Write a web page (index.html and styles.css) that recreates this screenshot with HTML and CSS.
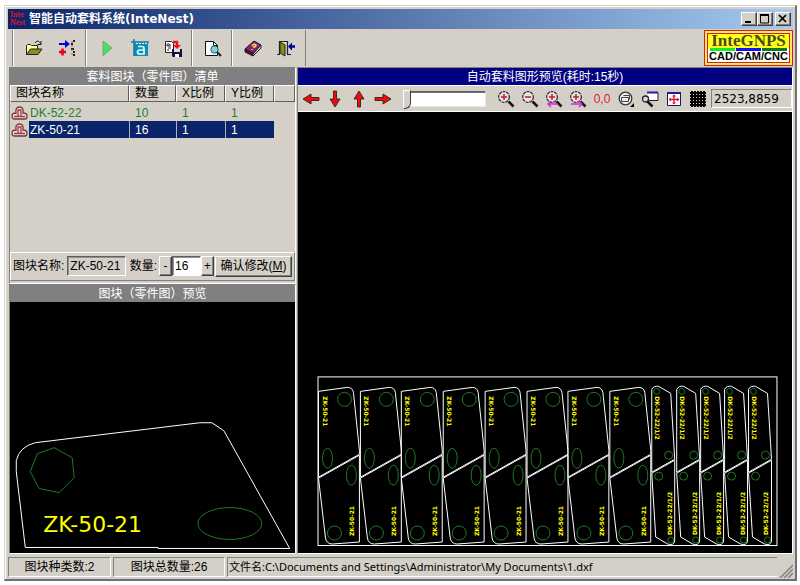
FILE: index.html
```
<!DOCTYPE html>
<html lang="zh-CN">
<head>
    <meta charset="utf-8">
    <title>智能自动套料系统(InteNest)</title>
    <link rel="stylesheet" href="styles.css">
</head>
<body>
    <div class="window">
        <!-- Title bar -->
        <header class="titlebar">
            <span class="app-icon"><span>Inte</span><span>Nest</span></span>
            <h1>智能自动套料系统(InteNest)</h1>
            <div class="window-buttons">
                <button type="button" aria-label="最小化"><svg width="10" height="10" viewBox="0 0 10 10"><path d="M1 8h6" stroke="#000" stroke-width="2"/></svg></button>
                <button type="button" aria-label="最大化"><svg width="10" height="10" viewBox="0 0 10 10"><path d="M0 1h9" stroke="#000" stroke-width="2"/><path d="M.5 1v8h8V1" fill="none" stroke="#000"/></svg></button>
                <button type="button" class="close" aria-label="关闭"><svg width="10" height="10" viewBox="0 0 10 10"><path d="M1 1l7 7M8 1l-7 7" stroke="#000" stroke-width="1.7"/></svg></button>
            </div>
        </header>

        <!-- Main toolbar -->
        <div class="toolbar">
            <div class="tool-group">
                <button type="button" aria-label="打开">
                    <svg width="18" height="16" viewBox="0 0 18 16"><path d="M1.500 14.500V5.500l1-1h3l1 1h6v4" fill="#ffff9c" stroke="#222"/><path d="M1.500 14.500l4-5.500h11.500l-4 5.500z" fill="#8f8f20" stroke="#222"/><path d="M10 3c2-3 4-2 5.500.5M16 1v3.500h-3.500" fill="none" stroke="#111"/></svg>
                </button>
                <button type="button" aria-label="添加图块">
                    <svg width="18" height="16" viewBox="0 0 18 16"><path d="M1 4h8" stroke="#0000e0" stroke-width="2"/><path d="M7 0l5 4-5 4z" fill="#0000e0"/><path d="M1 12h7M4.500 8.500v7" stroke="#f00018" stroke-width="2.500"/><path d="M15 1h2M13 4h2M13 9h3M15 12h2M15 15h2" stroke="#222" stroke-width="1.800"/><path d="M14 1v14" stroke="#b55" stroke-dasharray="2 2"/></svg>
                </button>
            </div>
            <div class="tool-group">
                <button type="button" aria-label="开始套料">
                    <svg width="18" height="18" viewBox="0 0 18 18"><path d="M5 2l9 7-9 8z" fill="#48e060" stroke="#6f9a72" stroke-width=".7"/></svg>
                </button>
                <button type="button" aria-label="文字标注">
                    <svg width="18" height="18" viewBox="0 0 18 18"><path d="M3 4h14v13H3z" fill="#078fb8"/><path d="M0 3h18M3 0v17" stroke="#087da4" stroke-width="1.500"/><path d="M5 4.500h12" stroke="#d8f3ff" stroke-dasharray="2 1"/><path d="M7 7.500h4q2 0 2 2V15H9q-2.500 0-2.500-2T9 11h4" fill="none" stroke="#e8fbff" stroke-width="1.700"/></svg>
                </button>
                <button type="button" aria-label="保存结果">
                    <svg width="18" height="17" viewBox="0 0 18 17"><path d="M1.500 1.500h6l2 2v9h-8z" fill="#fff" stroke="#222"/><path d="M3 4h2v2H3zM4 8h3M3 10h2M6 4v3" stroke="#333" fill="none"/><path d="M9 2h4v4" fill="none" stroke="#f01020" stroke-width="2.500"/><path d="M9 5h8l-4 4z" fill="#f01020"/><path d="M8 9h10v8H9l-1-1z" fill="#151545"/><path d="M10 9h6v3h-6z" fill="#ddd"/><path d="M11 14h4v3h-4z" fill="#fff"/></svg>
                </button>
            </div>
            <div class="tool-group">
                <button type="button" aria-label="预览">
                    <svg width="18" height="17" viewBox="0 0 18 17"><path d="M1.500 1.500h8l4 4v10h-12z" fill="#fff" stroke="#111"/><path d="M9.500 1.500v4h4" fill="none" stroke="#111"/><circle cx="10.500" cy="9.500" r="3.700" fill="#7fd0d5" stroke="#245b65"/><path d="M13 12l4 4" stroke="#222" stroke-width="2.200"/></svg>
                </button>
            </div>
            <div class="tool-group">
                <button type="button" aria-label="帮助">
                    <svg width="18" height="17" viewBox="0 0 18 17"><path d="M1 9l9-8 7 4-8 9z" fill="#82256d" stroke="#281028"/><path d="M1 9v3l8 4v-3z" fill="#511442" stroke="#281028"/><path d="M9 14l8-9v3l-8 8z" fill="#ddd" stroke="#281028"/><path d="M8 6q2-3 4-1 0 2-3 2M8 9v1" fill="none" stroke="#ffd85a" stroke-width="1.500"/></svg>
                </button>
                <button type="button" aria-label="退出">
                    <svg width="18" height="17" viewBox="0 0 18 17"><path d="M0 14.500h3M2.500 14V1.500h8V14M10 14.500h4" fill="none" stroke="#222" stroke-width="1.200"/><path d="M3 2l5 3v11l-5-3z" fill="#888b18" stroke="#222"/><path d="M14 6.500h4" stroke="#000094" stroke-width="2.500"/><path d="M11 6.500l4-4v8z" fill="#000094"/></svg>
                </button>
            </div>
            <div class="logo">
                <span class="logo-name">InteGNPS</span>
                <span class="logo-bars"><i></i><i></i><i></i></span>
                <span class="logo-sub">CAD/CAM/CNC</span>
            </div>
        </div>

        <main class="panels">
            <div class="left">
                <!-- Part list -->
                <section class="list-panel">
                    <h2>套料图块（零件图）清单</h2>
                    <div class="list">
                        <table>
                            <colgroup><col class="c-icon"><col class="c-name"><col class="c-num"><col class="c-scale"><col class="c-scale"><col></colgroup>
                            <thead>
                                <tr><th colspan="2">图块名称</th><th>数量</th><th>X比例</th><th>Y比例</th><th></th></tr>
                            </thead>
                            <tbody>
                                <tr class="done">
                                    <td><svg class="part-icon" width="17" height="14" viewBox="0 0 17 14"><use href="#partIcon"/></svg></td>
                                    <td>DK-52-22</td><td>10</td><td>1</td><td>1</td><td></td>
                                </tr>
                                <tr class="selected">
                                    <td><svg class="part-icon" width="17" height="14" viewBox="0 0 17 14"><use href="#partIcon"/></svg></td>
                                    <td>ZK-50-21</td><td>16</td><td>1</td><td>1</td><td></td>
                                </tr>
                            </tbody>
                        </table>
                    </div>
                    <form class="edit-bar">
                        <label for="partName">图块名称:</label>
                        <input type="text" id="partName" class="name-field" value="ZK-50-21" readonly>
                        <label for="partCount">数量:</label>
                        <button type="button" class="step minus">-</button>
                        <input type="text" id="partCount" class="count-field" value="16">
                        <button type="button" class="step">+</button>
                        <button type="button" class="confirm">确认修改(<u>M</u>)</button>
                    </form>
                </section>

                <!-- Part preview -->
                <section class="part-panel">
                    <h2>图块（零件图）预览</h2>
                    <div class="canvas">
                        <svg viewBox="10 301 285 252" preserveAspectRatio="xMidYMax meet">
                            <path class="outline" d="M25 547L16 471V460Q19 446 35 442L200 422H212L224 430L290 548H158V547Z"/>
                            <path class="hole" d="M54 447L72 457L74 477L59 492L39 488L30 471L37 453Z"/>
                            <ellipse class="hole" cx="230" cy="523" rx="32" ry="16"/>
                            <text class="mark big" x="43" y="532">ZK-50-21</text>
                        </svg>
                    </div>
                </section>
            </div>

            <!-- Nesting preview -->
            <section class="right">
                <h2 class="active">自动套料图形预览(耗时:15秒)</h2>
                <div class="view-bar">
                    <div class="arrows">
                        <button type="button" aria-label="左移"><svg width="18" height="18" viewBox="0 0 18 18"><use href="#arrow"/></svg></button>
                        <button type="button" aria-label="下移"><svg width="18" height="18" viewBox="0 0 18 18"><use href="#arrow" transform="rotate(-90 9 9)"/></svg></button>
                        <button type="button" aria-label="上移"><svg width="18" height="18" viewBox="0 0 18 18"><use href="#arrow" transform="rotate(90 9 9)"/></svg></button>
                        <button type="button" aria-label="右移"><svg width="18" height="18" viewBox="0 0 18 18"><use href="#arrow" transform="rotate(180 9 9)"/></svg></button>
                    </div>
                    <input type="range" class="slider" min="0" max="100" value="0" aria-label="移动步长">
                    <div class="view-tools">
                        <button type="button" aria-label="放大"><svg width="18" height="18" viewBox="0 0 18 18"><use href="#lens"/><path d="M4 7h6M7 4v6" stroke="#c41840" stroke-width="1.500"/></svg></button>
                        <button type="button" aria-label="缩小"><svg width="18" height="18" viewBox="0 0 18 18"><use href="#lens"/><path d="M4 7h6" stroke="#a02048" stroke-width="1.500"/></svg></button>
                        <button type="button" aria-label="上一视图"><svg width="18" height="18" viewBox="0 0 18 18"><use href="#lens"/><path d="M4 7h6M7 4v6" stroke="#c41840" stroke-width="1.500"/><path d="M3 14h10M6 11l-3 3 3 3" fill="none" stroke="#e020e0" stroke-width="1.400"/></svg></button>
                        <button type="button" aria-label="下一视图"><svg width="18" height="18" viewBox="0 0 18 18"><use href="#lens"/><path d="M4 7h6M7 4v6" stroke="#c41840" stroke-width="1.500"/><path d="M2 14h11M10 11l3 3-3 3" fill="none" stroke="#e020e0" stroke-width="1.400"/></svg></button>
                        <button type="button" class="origin">0,0</button>
                        <button type="button" aria-label="全部显示"><svg width="18" height="18" viewBox="0 0 18 18"><circle cx="8.500" cy="8.500" r="6.300" fill="#eee" stroke="#333" stroke-width="1.300"/><path d="M4.500 7.500h7v4h-7zM6.500 5.500h6v4" fill="none" stroke="#444"/><path d="M17 13v4h-4z" fill="#000"/></svg></button>
                        <button type="button" aria-label="窗口缩放"><svg width="18" height="18" viewBox="0 0 18 18"><path d="M6 2.500h11v8H8" fill="#fff" stroke="#222"/><path d="M6 2.500h11" stroke="#1c1ca8" stroke-width="2"/><circle cx="4.500" cy="9" r="3" fill="#ddd" stroke="#222" stroke-width="1.300"/><path d="M6.500 11.500l5 5" stroke="#111" stroke-width="2.500"/></svg></button>
                        <button type="button" aria-label="居中"><svg width="18" height="18" viewBox="0 0 18 18"><path d="M2.500 3.500h13v12h-13z" fill="#fff" stroke="#1a1a50"/><path d="M2 3h14" stroke="#1c1c94" stroke-width="2"/><path d="M4 9.500h10M9 5v9" stroke="#e01030" stroke-width="1.300"/><path d="M4 9.500l2-2v4zM14 9.500l-2-2v4zM9 4.500l-2 2h4zM9 14.500l-2-2h4z" fill="#e01030"/></svg></button>
                        <button type="button" aria-label="网格"><svg width="18" height="18" viewBox="0 0 18 18"><path d="M1 3h16M1 6h16M1 9h16M1 12h16M1 15h16M3 1v16M6 1v16M9 1v16M12 1v16M15 1v16" stroke="#000" stroke-width="2"/></svg></button>
                    </div>
                    <output class="coords">2523,8859</output>
                </div>
                <div class="canvas">
                    <svg viewBox="298 111 494 442" preserveAspectRatio="xMidYMax meet">
                        <defs>
                            <g id="partIcon">
                                <path d="M1 10q0-3 4-3Q4 1 8.500 1T12 7q4 0 4 3 0 3-2 3H3q-2 0-2-3z" fill="#f3d6d4" stroke="#73333a" stroke-width="1.300"/>
                                <path d="M3 10.500h11M7 10V4h3v6" fill="none" stroke="#9b4048" stroke-width="1.300"/>
                            </g>
                            <g id="arrow">
                                <path d="M1 9l8-5v3.500h8v3H9V14z" fill="#e80c14" stroke="#321" stroke-width=".9"/>
                            </g>
                            <g id="lens">
                                <circle cx="7" cy="7" r="5.300" fill="#ece4e0" stroke="#333" stroke-width="1.300" stroke-dasharray="3 .8"/>
                                <path d="M11.500 11.500l5 5" stroke="#111" stroke-width="2.500"/>
                            </g>
                            <!-- A pair of ZK-50-21 parts, head to tail -->
                            <g id="zkPair">
                                <path class="outline" d="M0 477V391L29 387Q34 387 35 392L41 450V454Z"/>
                                <path class="outline" d="M0 478L7 538Q8 544 14 544L41 542V455L0 478"/>
                                <circle class="hole" cx="26" cy="399" r="7"/>
                                <ellipse class="hole" cx="9" cy="458" rx="5" ry="10"/>
                                <circle class="hole" cx="16" cy="533" r="7"/>
                                <ellipse class="hole" cx="33" cy="475" rx="5" ry="10"/>
                                <text class="mark" transform="translate(4 396) rotate(90)">ZK-50-21</text>
                                <text class="mark" transform="translate(36 536) rotate(-90)">ZK-50-21</text>
                            </g>
                            <!-- A pair of DK-52-22 parts -->
                            <g id="dkPair">
                                <path class="outline" d="M0 472V389Q2 385 7 386L19 393L22 442L23 459Z"/>
                                <path class="outline" d="M0 473L4 537L16 544Q22 546 23 541V460Z"/>
                                <circle class="hole" cx="5" cy="391" r="3"/>
                                <circle class="hole" cx="17" cy="455" r="4"/>
                                <circle class="hole" cx="7" cy="476" r="4"/>
                                <circle class="hole" cx="19" cy="540" r="3"/>
                                <text class="mark" transform="translate(3 396) rotate(90)">DK-52-22/1/2</text>
                                <text class="mark" transform="translate(20 535) rotate(-90)">DK-52-22/1/2</text>
                            </g>
                        </defs>
                        <rect class="outline" x="317.500" y="376.500" width="460" height="169"/>
                        <use href="#zkPair" x="318"/>
                        <use href="#zkPair" x="360"/>
                        <use href="#zkPair" x="401"/>
                        <use href="#zkPair" x="443"/>
                        <use href="#zkPair" x="485"/>
                        <use href="#zkPair" x="527"/>
                        <use href="#zkPair" x="568"/>
                        <use href="#zkPair" x="610"/>
                        <use href="#dkPair" x="652"/>
                        <use href="#dkPair" x="677"/>
                        <use href="#dkPair" x="701"/>
                        <use href="#dkPair" x="725"/>
                        <use href="#dkPair" x="749"/>
                    </svg>
                </div>
            </section>
        </main>

        <!-- Status bar -->
        <footer class="statusbar">
            <span class="kinds">图块种类数:2</span>
            <span class="total">图块总数量:26</span>
            <span class="file">文件名:C:\Documents and Settings\Administrator\My Documents\1.dxf</span>
            <svg class="grip" width="14" height="14" viewBox="0 0 14 14"><path d="M1 14L14 1M5 14l9-9M9 14l5-5" stroke="#808080" stroke-width="1.500"/></svg>
        </footer>
    </div>
</body>
</html>
```
FILE: styles.css
```
* {
    box-sizing: border-box;
}
body {
    margin: 0;
    height: 100vh;
    padding: 5px 3px 4px 4px;
    background: #fff;
    font-family: "Liberation Sans", "Noto Sans CJK SC", sans-serif;
    font-size: 12px;
    line-height: 16px;
    color: #000;
}
h1, h2 {
    margin: 0;
    font-size: 12px;
    white-space: nowrap;
}
button, input {
    font: inherit;
    color: inherit;
    margin: 0;
    padding: 0;
}
button {
    display: flex;
    align-items: center;
    justify-content: center;
    border: 0;
    background: none;
}
svg {
    display: block;
}

/* Window frame */
.window {
    height: 100%;
    display: flex;
    flex-direction: column;
    background: #d4d0c8;
    border: 1px solid #d4d0c8;
    border-right: 2px solid #707070;
    border-bottom: 2px solid #707070;
    box-shadow: inset 1px 1px #fff;
    padding: 3px 2px 1px 3px;
}
.titlebar {
    display: flex;
    align-items: center;
    height: 20px;
    flex: none;
    background: linear-gradient(to right, #0a246a, #a6caf0);
    color: #fff;
    padding: 0 2px;
}
.titlebar h1 {
    flex: 1;
    margin-left: 3px;
    font-family: "DejaVu Sans", "Noto Sans CJK SC", sans-serif;
    font-size: 12px;
    font-weight: bold;
}
.app-icon {
    display: flex;
    flex-direction: column;
    width: 16px;
    font: bold 8px/8px "Liberation Serif", serif;
    color: #e01028;
}
.window-buttons {
    display: flex;
}
.window-buttons button {
    width: 16px;
    height: 14px;
}
.window-buttons .close {
    margin-left: 2px;
}
.window-buttons button,
.step,
.confirm {
    background: #d4d0c8;
    border: 1px solid;
    border-color: #fff #404040 #404040 #fff;
    box-shadow: inset -1px -1px #808080;
}

/* Main toolbar */
.toolbar {
    display: flex;
    flex: none;
    height: 38px;
    padding: 1px 0 1px 5px;
}
.tool-group {
    display: flex;
    align-items: center;
    padding: 0 3px;
    border-left: 1px solid #fff;
    box-shadow: -1px 0 #808080;
}
.tool-group button {
    width: 33px;
    height: 30px;
}
.tool-group:nth-child(4) {
    border-right: 1px solid #808080;
}
.logo {
    display: flex;
    flex-direction: column;
    margin-left: auto;
    width: 89px;
    border: 1px solid #d02020;
    box-shadow: inset 0 0 0 2px #ffe860, inset 0 0 0 3px #d02020;
    background: #fff;
    padding: 3px;
    text-align: center;
}
.logo-name {
    height: 14px;
    background: #ffff20;
    font: bold 17px/14px "Liberation Serif", serif;
    color: #4b4b10;
}
.logo-bars {
    display: flex;
    gap: 1px;
    height: 5px;
    padding: 0 2px;
}
.logo-bars i {
    flex: 1;
    background: #10f020;
}
.logo-bars i:nth-child(2) {
    background: #1010f0;
}
.logo-bars i:nth-child(3) {
    background: #107818;
}
.logo-sub {
    font-size: 11px;
    line-height: 11px;
    font-weight: bold;
}

/* Panels */
.panels {
    flex: 1;
    min-height: 0;
    display: grid;
    grid-template-columns: 289fr 496fr;
}
.left {
    display: grid;
    grid-template-rows: 217fr 271fr;
    min-height: 0;
}
.list-panel,
.part-panel,
.right {
    display: flex;
    flex-direction: column;
    min-width: 0;
    min-height: 0;
    border: 1px solid;
    border-color: #808080 #fff #fff #808080;
}
.left > section {
    margin: 0 1px 0 1px;
}
h2 {
    flex: none;
    height: 17px;
    line-height: 18px;
    text-align: center;
    font-weight: normal;
    background: #808080;
    color: #fff;
}
h2.active {
    background: #000080;
}
.canvas {
    flex: 1;
    min-height: 0;
    background: #000;
}
.canvas svg {
    width: 100%;
    height: 100%;
}

/* Part list */
.list {
    flex: 1;
    min-height: 0;
    overflow: hidden;
}
table {
    width: 100%;
    table-layout: fixed;
    border-collapse: separate;
    border-spacing: 0;
}
.c-icon {
    width: 19px;
}
.c-name {
    width: 100px;
}
.c-num {
    width: 47px;
}
.c-scale {
    width: 49px;
}
th {
    height: 17px;
    padding: 0 5px;
    line-height: 15px;
    text-align: left;
    font-weight: normal;
    border: 1px solid;
    border-color: #fff #606060 #606060 #fff;
}
td {
    height: 17px;
    padding: 0 0 0 6px;
    font-size: 12px;
    line-height: 16px;
    border-right: 1px solid transparent;
}
tbody::before {
    content: "";
    display: block;
    height: 2px;
}
td:nth-child(1),
td:nth-child(2) {
    padding-left: 1px;
    border-right: 0;
}
.done {
    color: #208028;
}
.selected td:nth-child(n+2):nth-child(-n+5) {
    background: #0a246a;
    color: #fff;
}
td:nth-child(n+3) {
    border-left: 1px solid transparent;
    border-right: 0;
    padding-left: 5px;
}
.selected td:nth-child(n+3) {
    border-left-color: #b0b0b8;
}
.selected td:nth-child(6) {
    border-left: 0;
}

/* Edit bar */
.edit-bar {
    display: flex;
    align-items: center;
    flex: none;
    height: 29px;
    margin-bottom: 2px;
    padding: 2px;
    border: 1px solid;
    border-color: #fff #808080 #808080 #fff;
    white-space: nowrap;
}
.edit-bar input {
    height: 20px;
    min-width: 0;
    border: 1px solid;
    border-color: #606060 #fff #fff #606060;
    box-shadow: inset 1px 1px #909090;
    border-radius: 0;
    padding-left: 2px;
}
.edit-bar .name-field {
    flex: 1;
    background: #d4d0c8;
    margin: 0 4px 0 3px;
}
.edit-bar .count-field {
    width: 29px;
    background: #fff;
}
.step {
    width: 13px;
    height: 20px;
}
.minus {
    margin-left: 2px;
}
.confirm {
    width: 77px;
    height: 21px;
    margin-left: 1px;
}

/* View toolbar */
.view-bar {
    display: flex;
    align-items: center;
    flex: none;
    height: 27px;
    border-top: 1px solid #fff;
    border-bottom: 1px solid #fff;
}
.arrows,
.view-tools {
    display: flex;
}
.arrows {
    padding-left: 1px;
}
.view-bar button {
    width: 24px;
    height: 22px;
}
.slider {
    -webkit-appearance: none;
    appearance: none;
    flex: none;
    width: 84px;
    height: 20px;
    margin: 0 8px 0 7px;
    background: none;
}
.slider::-webkit-slider-runnable-track {
    height: 16px;
    margin-left: 5px;
    background: #fff;
    border: 1px solid;
    border-color: #606060 #e8e8e8 #e8e8e8 #606060;
    box-shadow: inset 0 1px #707070;
}
.slider::-webkit-slider-thumb {
    -webkit-appearance: none;
    width: 8px;
    height: 19px;
    margin: -2px 0 0 -5px;
    background: #d4d0c8;
    border: 1px solid;
    border-color: #fff #404040 #404040 #fff;
    border-bottom-right-radius: 6px;
}
.view-bar .origin {
    color: #e01830;
}
.coords {
    flex: 1;
    height: 19px;
    margin-left: 1px;
    padding-left: 2px;
    line-height: 18px;
    font-size: 12px;
    font-family: "DejaVu Sans", sans-serif;
    border: 1px solid;
    border-color: #808080 #fff #fff #808080;
}

/* Drawings */
.outline {
    fill: none;
    stroke: #fff;
}
.hole {
    fill: none;
    stroke: #1c7a26;
}
.mark {
    fill: #ffff00;
    font: bold 6px "DejaVu Sans", sans-serif;
}
.mark.big {
    font-size: 22px;
    font-weight: normal;
}

/* Status bar */
.statusbar {
    display: flex;
    gap: 2px;
    flex: none;
    height: 24px;
    padding-top: 3px;
}
.statusbar span {
    height: 20px;
    line-height: 18px;
    text-align: center;
    border: 1px solid;
    border-color: #808080 #fff #fff #808080;
    white-space: nowrap;
    overflow: hidden;
}
.kinds {
    width: 103px;
}
.total {
    width: 112px;
}
.statusbar .file {
    flex: 1;
    padding-left: 1px;
    font-family: "Noto Sans", "Noto Sans CJK SC", sans-serif;
    font-size: 11px;
    text-align: left;
    border-right: 0;
}
.grip {
    align-self: flex-end;
}
```
